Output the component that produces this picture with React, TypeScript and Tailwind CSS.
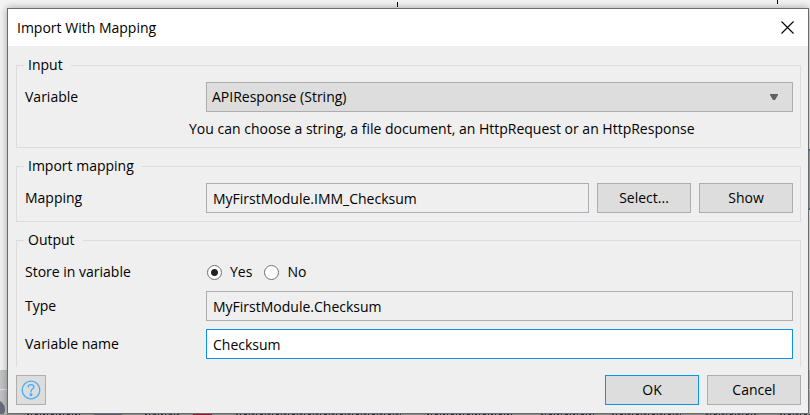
import React, { useState } from 'react';
import { clsx } from 'clsx';

const ROW = 'grid grid-cols-[181px_minmax(0,1fr)] items-center';
const FIELD = 'w-full h-[30px] border px-1.5 text-black outline-none';
const READONLY_FIELD = 'border-[#abadb3] bg-[#efefef]';
const ACTIVE_FIELD = 'border-[#0a96e6] bg-white';

interface GroupProps {
  title: string;
  open?: boolean;
  children: React.ReactNode;
}

const Group: React.FC<GroupProps> = ({ title, open, children }) => (
  <fieldset className={clsx('border border-[#dcdcdc] pl-2 pr-[7px] pt-[7px] pb-2', open && 'border-b-0')}>
    <legend className="h-5 pl-1 pr-2 -ml-px">{title}</legend>
    {children}
  </fieldset>
);

interface DialogButtonProps {
  children: React.ReactNode;
  primary?: boolean;
}

const DialogButton: React.FC<DialogButtonProps> = ({ children, primary }) => (
  <button
    type="button"
    className={clsx(
      'w-[94px] h-[30px] shrink-0 border bg-[#dddddd] text-center',
      primary ? 'border-[#0a96e6]' : 'border-[#adadad]'
    )}
  >
    {children}
  </button>
);

interface RadioProps {
  label: string;
  checked: boolean;
  onChange: () => void;
}

const Radio: React.FC<RadioProps> = ({ label, checked, onChange }) => (
  <label className="flex items-center gap-2">
    <input
      type="radio"
      name="store"
      checked={checked}
      onChange={onChange}
      className="appearance-none w-[15px] h-[15px] rounded-full border border-[#707070] bg-white checked:bg-[radial-gradient(circle,#222222_3px,#ffffff_4px)]"
    />
    {label}
  </label>
);

// Slivers of the editor that stay visible around the dialog
const Backdrop = () => (
  <div className="absolute inset-0 flex flex-col bg-[#f4f4f4]" aria-hidden="true">
    <div className="flex-1 relative">
      <div className="absolute left-[397px] top-0.5 h-[5px] w-px bg-black" />
      <div className="absolute right-[32px] top-0 h-1 w-px bg-black" />
      <div className="absolute right-0 top-[149px] w-0.5 h-[61px] border-y-2 border-[#2a7ba5] bg-[#9fb3b8]" />
    </div>
    <div className="h-[19px] bg-[#c4c6c5]" />
    <div className="h-[26px] border-t border-[#e4e4e4] bg-[#c2c3c6] relative overflow-hidden">
      <div className="absolute -left-3.5 top-2.5 w-[19px] h-[19px] rounded-full bg-[#696d7c]" />
      <svg className="absolute bottom-0 left-0 w-full h-px" preserveAspectRatio="none">
        <rect width="100%" height="1" fill="#a3a3a5" />
        <g stroke="#33343f" strokeWidth="2" strokeDasharray="2 2 1 3 3 2 1 2">
          <path d="M27 0H81M145 0H181M236 0H404M427 0H513M541 0H597M612 0H682M706 0H756M780 0H810" />
        </g>
        <rect x="94" width="28" height="1" fill="#696d7c" />
        <rect x="193" width="19" height="1" fill="#a32136" />
      </svg>
    </div>
  </div>
);

export default function App() {
  const [store, setStore] = useState(true);
  const [name, setName] = useState('Checksum');

  return (
    <div className="relative min-h-screen overflow-hidden pt-2 pl-[7px] pr-px pb-px font-['Open_Sans','Noto_Sans',sans-serif] text-[14px] leading-5 text-black">
      <Backdrop />

      <div role="dialog" aria-labelledby="title" className="relative border border-[#6b6b6b] bg-[#efefef] shadow-[0_0_8px_rgba(0,0,0,0.35)]">
        <header className="h-[37px] bg-white flex items-center justify-between pl-[9px] pr-[14px]">
          <h1 id="title">Import With Mapping</h1>
          <button type="button" aria-label="Close" className="w-[13px] h-[13px]">
            <svg viewBox="0 0 13 13" className="w-full h-full" stroke="#000" strokeWidth="1.1">
              <path d="M.5 .5l12 12M12.5 .5l-12 12" />
            </svg>
          </button>
        </header>

        <form className="flex flex-col gap-2 pt-[9px] pl-2 pr-[7px] pb-2" onSubmit={(e) => e.preventDefault()}>
          <Group title="Input">
            <div className={ROW}>
              <label htmlFor="variable">Variable</label>
              <div className="relative">
                <select id="variable" className="appearance-none w-full h-[30px] border border-[#adadad] bg-[#dddddd] px-[5px] outline-none">
                  <option>APIResponse (String)</option>
                </select>
                <svg viewBox="0 0 8 6" className="absolute right-[15px] top-3 w-2 h-1.5 pointer-events-none" fill="#606060">
                  <path d="M0 0h8v1L5 6H3L0 1z" />
                </svg>
              </div>
            </div>
            <p className="mt-[7px] pl-[164px]">You can choose a string, a file document, an HttpRequest or an HttpResponse</p>
          </Group>

          <Group title="Import mapping">
            <div className={ROW}>
              <label htmlFor="mapping">Mapping</label>
              <div className="flex gap-2">
                <input id="mapping" readOnly value="MyFirstModule.IMM_Checksum" className={clsx(FIELD, READONLY_FIELD)} />
                <DialogButton>Select...</DialogButton>
                <DialogButton>Show</DialogButton>
              </div>
            </div>
          </Group>

          <Group title="Output" open>
            <div className={clsx(ROW, 'h-[30px]')} role="radiogroup" aria-labelledby="store-label">
              <span id="store-label">Store in variable</span>
              <div className="flex gap-3 pl-px">
                <Radio label="Yes" checked={store} onChange={() => setStore(true)} />
                <Radio label="No" checked={!store} onChange={() => setStore(false)} />
              </div>
            </div>
            <div className={clsx(ROW, 'mt-1')}>
              <label htmlFor="type">Type</label>
              <input id="type" readOnly value="MyFirstModule.Checksum" className={clsx(FIELD, READONLY_FIELD)} />
            </div>
            <div className={clsx(ROW, 'mt-2')}>
              <label htmlFor="name">Variable name</label>
              <input id="name" value={name} onChange={(e) => setName(e.target.value)} className={clsx(FIELD, ACTIVE_FIELD)} />
            </div>
          </Group>

          <footer className="flex gap-2">
            <button type="button" aria-label="Help" className="w-[30px] h-[30px] mr-auto flex items-center justify-center border border-[#adadad] bg-[#dddddd]">
              <svg viewBox="0 0 20 20" className="w-5 h-5" fill="none" stroke="#4aaef5" strokeWidth="1.3">
                <circle cx="10" cy="10" r="8.8" />
                <path d="M7.2 7.6V7c0-1.4 1.1-2.3 2.8-2.3s2.9.9 2.9 2.3c0 2-2.9 2.1-2.9 4.3v1.2" />
                <circle cx="10" cy="14.8" r=".8" fill="#4aaef5" />
              </svg>
            </button>
            <DialogButton primary>OK</DialogButton>
            <DialogButton>Cancel</DialogButton>
          </footer>
        </form>
      </div>
    </div>
  );
}
